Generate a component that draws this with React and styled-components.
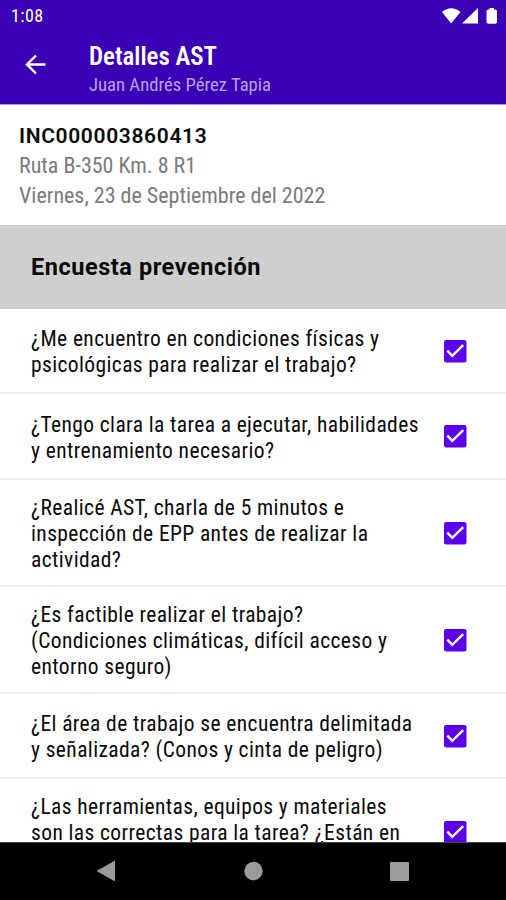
import styled, { createGlobalStyle } from "styled-components";

const GlobalStyle = createGlobalStyle`
  * {
    box-sizing: border-box;
  }
  body {
    margin: 0;
    background: #fff;
  }
  p, h1, h2, ul {
    margin: 0;
    padding: 0;
  }
`;
const Screen = styled.div`
  width: 506px;
  height: 900px;
  display: flex;
  flex-direction: column;
  overflow: hidden;
  background: #fff;
  color: #0a0a0a;
  font-family: Roboto, "Liberation Sans", sans-serif;
`;
const Header = styled.header`
  flex: none;
  height: 104px;
  background: #3a00b3;
  color: #fff;
`;
const StatusBar = styled.div`
  height: 32px;
  display: flex;
  align-items: center;
  justify-content: space-between;
  padding: 0 7px 0 11px;
`;
const Toolbar = styled.div`
  display: flex;
  padding: 10px 0 0 25px;
`;
const BackIcon = styled.svg`
  margin: 12px 43px 0 0;
`;
const Line = styled.span`
  display: block;
  width: fit-content;
  white-space: nowrap;
  font-size: ${(props) => props.$size}px;
  line-height: ${(props) => props.$height}px;
  font-weight: ${(props) => props.$weight || 400};
  letter-spacing: ${(props) => props.$spacing || 0}px;
  color: ${(props) => props.$color || "inherit"};
  font-family: "Roboto Condensed", Roboto, sans-serif;
  font-stretch: 75%;
`;
const Info = styled.section`
  flex: none;
  height: 121px;
  padding: 17px 20px 0 19px;
  border-top: 1px solid #a893e2;
`;
const Incident = styled.h1`
  font-size: 21px;
  line-height: 29px;
  font-weight: 600;
  letter-spacing: 0.65px;
`;
const SectionTitle = styled.h2`
  flex: none;
  height: 84px;
  padding: 0 31px;
  background: #cfcfcf;
  font-size: 23.5px;
  line-height: 85px;
  font-weight: 700;
  letter-spacing: 0.55px;
`;
const List = styled.ul`
  flex: 1;
  min-height: 0;
  overflow: hidden;
  list-style: none;
`;
const Row = styled.li`
  height: ${(props) => props.$height}px;
  display: flex;
  align-items: center;
  justify-content: space-between;
  padding: 0 39px 0 31px;
  border-bottom: 2px solid #ededed;
`;
const Question = styled.div`
  padding: 3px 0 ${(props) => props.$bottom || 0}px;
`;
const Check = styled.svg`
  flex: none;
`;
const NavBar = styled.nav`
  flex: none;
  height: 58px;
  background: #000;
  border-top: 1px solid #444;
`;

const questions = [
  { height: 85, lines: ["¿Me encuentro en condiciones físicas y", "psicológicas para realizar el trabajo?"] },
  { height: 86, lines: ["¿Tengo clara la tarea a ejecutar, habilidades", "y entrenamiento necesario?"] },
  { height: 107, lines: ["¿Realicé AST, charla de 5 minutos e", "inspección de EPP antes de realizar la", "actividad?"] },
  { height: 107, lines: ["¿Es factible realizar el trabajo?", "(Condiciones climáticas, difícil acceso y", "entorno seguro)"] },
  { height: 85, lines: ["¿El área de trabajo se encuentra delimitada", "y señalizada? (Conos y cinta de peligro)"] },
  { height: 107, bottom: 26, lines: ["¿Las herramientas, equipos y materiales", "son las correctas para la tarea? ¿Están en"] },
];

function Checkbox() {
  return (
    <Check width="24" height="24" viewBox="0 0 24 24">
      <rect x="1" y="1" width="22.5" height="22.5" rx="2.2" fill="#5b00e8" />
      <path d="M4.300 11.700l5 5.100L20.200 6.200" fill="none" stroke="#fff" strokeWidth="2.5" />
    </Check>
  );
}

export default function App() {
  return (
    <Screen>
      <GlobalStyle />
      <Header>
        <StatusBar>
          <Line $size={18} $height={32} $spacing={0.4}>1:08</Line>
          <svg width="57" height="18" viewBox="0 0 57 18" fill="#fff">
            <path d="M0 5Q9.200 -2.500 18.500 5L9.200 16.500z" />
            <path d="M36 1V16.500H20z" />
            <path d="M44.500 3.500l1.500-1h1.500V1h4.500v1.500h1.500l1.500 1V15.500l-1.500 1.300h-7.500l-1.500-1.300z" />
          </svg>
        </StatusBar>
        <Toolbar>
          <BackIcon width="21" height="21" viewBox="0 0 21 21" fill="none" stroke="#fff" strokeWidth="2.4">
            <path d="M20.500 10.500H2M11 1.500L2 10.500l9 9" />
          </BackIcon>
          <div>
            <Line as="h1" $size={24.9} $height={30} $weight={600}>Detalles AST</Line>
            <Line as="p" $size={18.7} $height={27} $color="#b8a0ee">Juan Andrés Pérez Tapia</Line>
          </div>
        </Toolbar>
      </Header>
      <Info>
        <Incident>INC000003860413</Incident>
        <Line as="p" $size={22} $height={30} $color="#7a7a7a">Ruta B-350 Km. 8 R1</Line>
        <Line as="p" $size={22} $height={30} $color="#7a7a7a">Viernes, 23 de Septiembre del 2022</Line>
      </Info>
      <SectionTitle>Encuesta prevención</SectionTitle>
      <List>
        {questions.map((question) => (
          <Row key={question.lines[0]} $height={question.height}>
            <Question $bottom={question.bottom}>
              {question.lines.map((line) => (
                <Line key={line} $size={21.5} $height={25.7} $weight={450} $spacing={0.39}>{line}</Line>
              ))}
            </Question>
            <Checkbox />
          </Row>
        ))}
      </List>
      <NavBar>
        <svg width="506" height="57" viewBox="0 843 506 57" fill="#9b9b9b">
          <path d="M96.500 871L115 860.500v21z" />
          <circle cx="253.500" cy="871" r="9.200" />
          <rect x="390" y="862" width="19" height="19" rx="1" />
        </svg>
      </NavBar>
    </Screen>
  );
}
